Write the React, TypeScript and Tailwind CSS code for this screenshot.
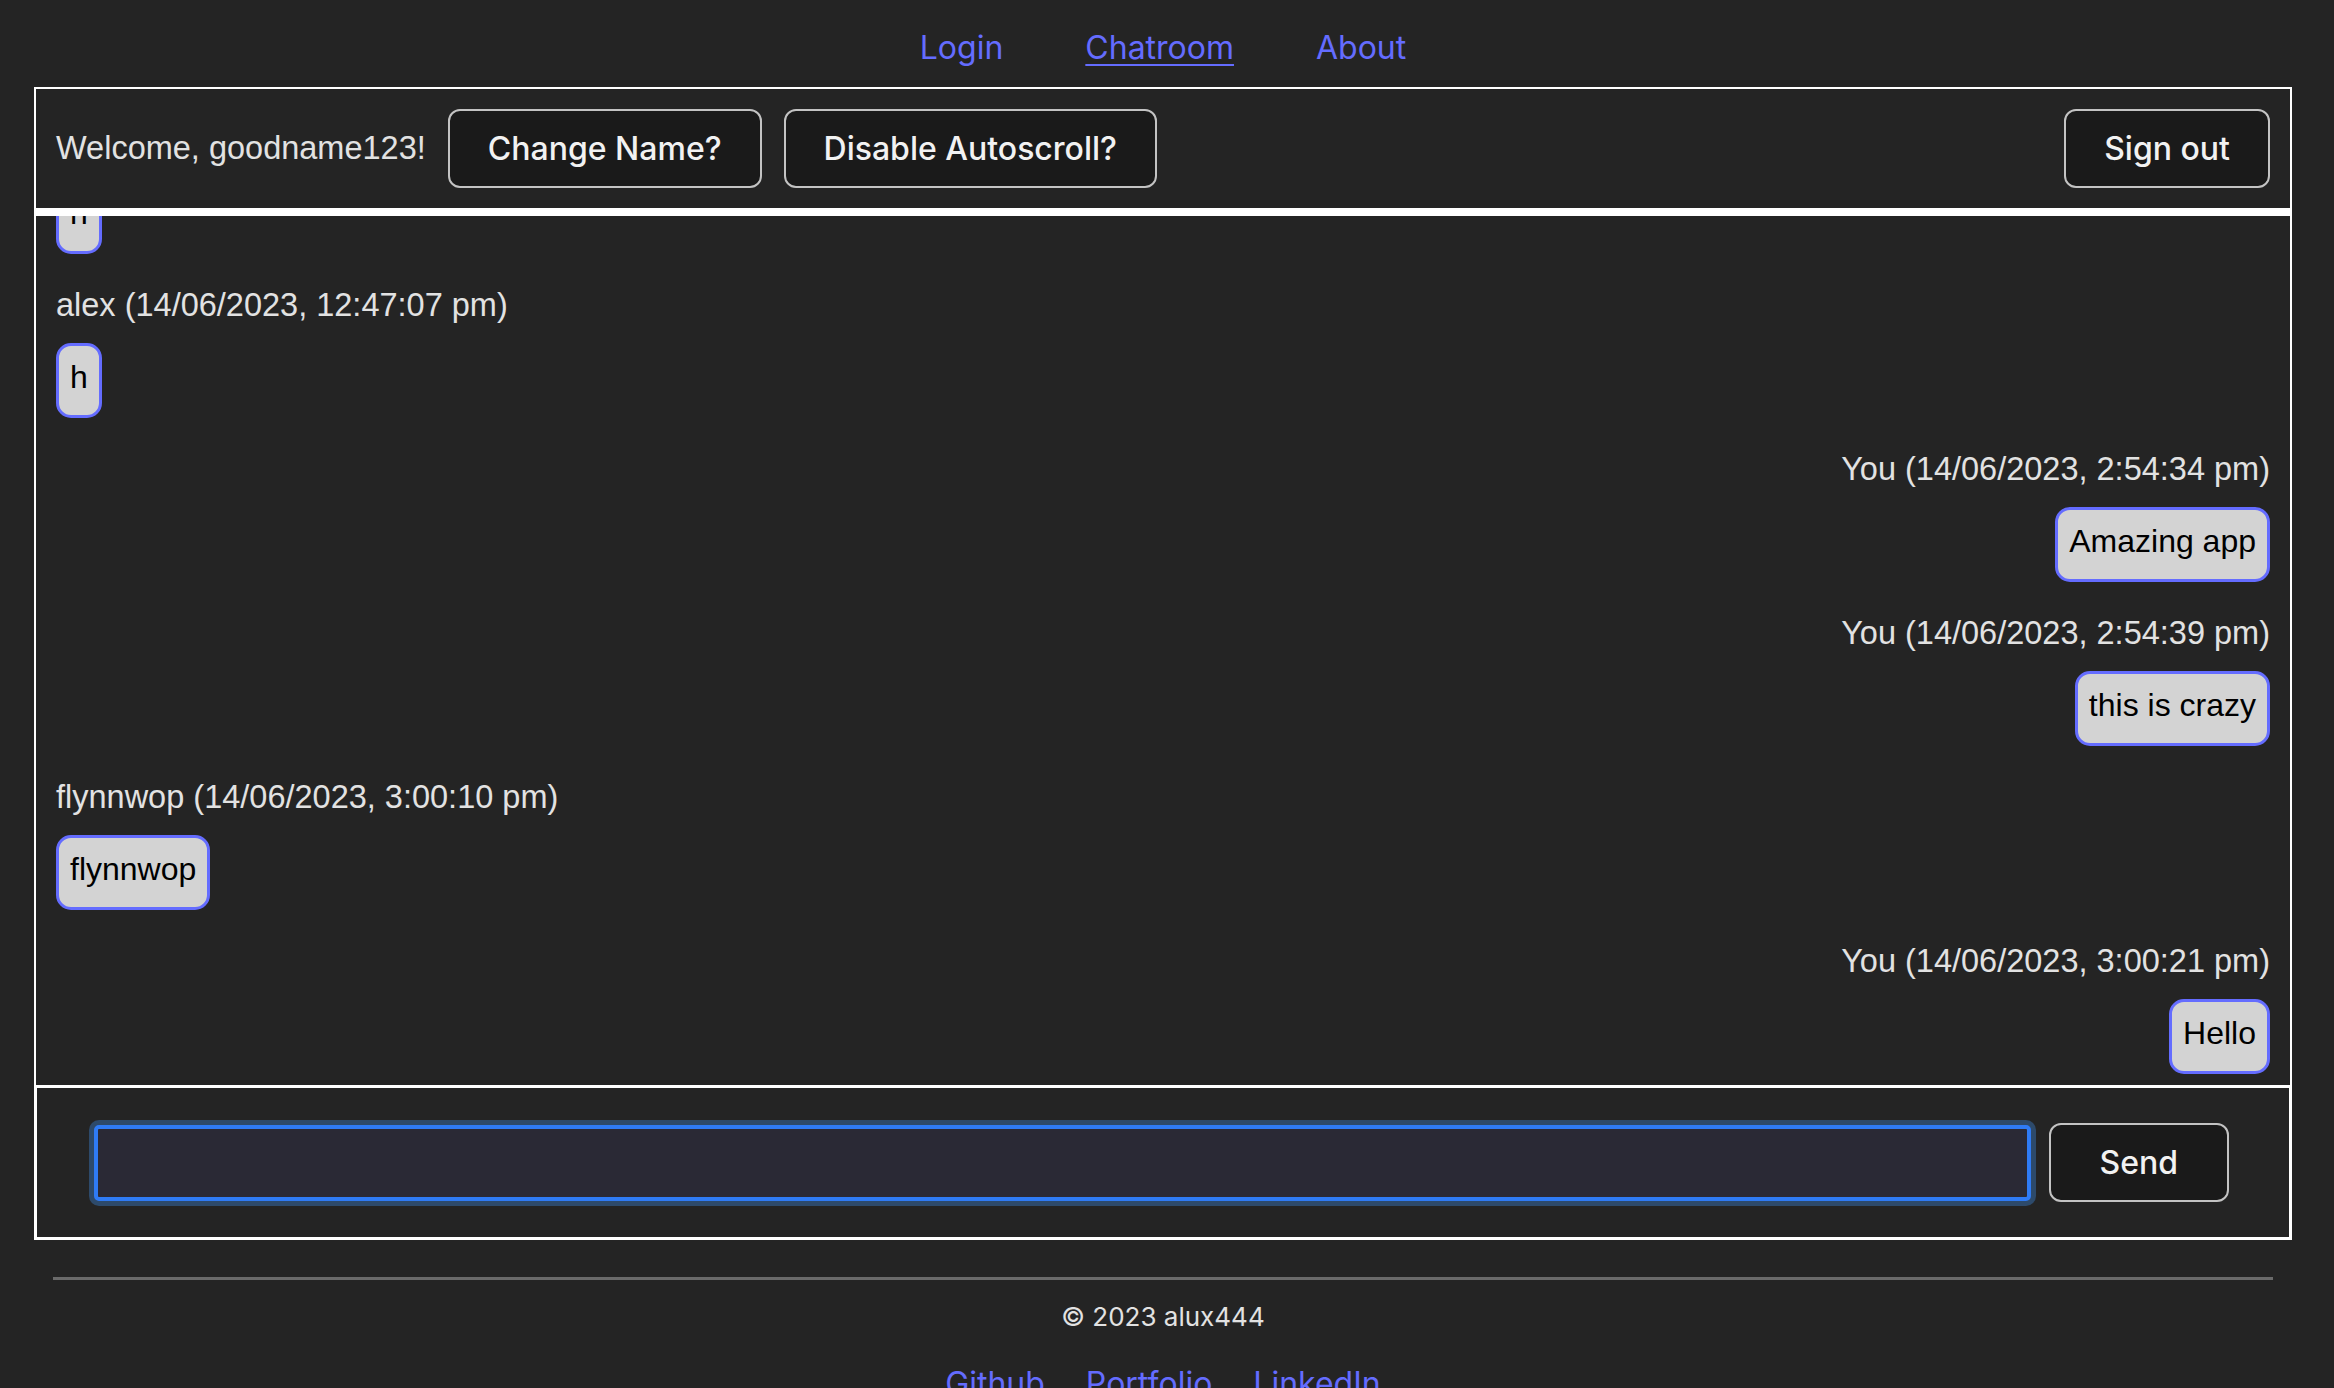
import React from "react";

type Msg = { name: string; time: string; text: string; mine?: boolean };

const messages: Msg[] = [
  { name: "alex", time: "14/06/2023, 12:46:58 pm", text: "h" },
  { name: "alex", time: "14/06/2023, 12:47:05 pm", text: "h" },
  { name: "alex", time: "14/06/2023, 12:47:07 pm", text: "h" },
  { name: "You", time: "14/06/2023, 2:54:34 pm", text: "Amazing app", mine: true },
  { name: "You", time: "14/06/2023, 2:54:39 pm", text: "this is crazy", mine: true },
  { name: "flynnwop", time: "14/06/2023, 3:00:10 pm", text: "flynnwop" },
  { name: "You", time: "14/06/2023, 3:00:21 pm", text: "Hello", mine: true },
];

const btn =
  "h-[79px] shrink-0 rounded-[12px] border-2 border-[#c3c3c3] bg-[#1a1a1a] font-['Inter',sans-serif] text-[32px] font-medium text-[#f2f2f2]";

function Message({ m }: { m: Msg }) {
  return (
    <div className={`flex flex-col ${m.mine ? "items-end" : "items-start"}`}>
      <p className="text-[32.5px] leading-[48px]">
        {m.name} ({m.time})
      </p>
      <div className="mt-[14px] rounded-[15px] border-[3px] border-[#646cff] bg-[#d3d3d3] px-[11px] pt-[13px] pb-[19px] text-[32px] leading-[37px] text-black">
        {m.text}
      </div>
    </div>
  );
}

export default function App() {
  return (
    <div className="h-screen overflow-hidden bg-[#242424] pr-[8px] font-['Liberation_Sans',Arial,sans-serif] text-[#e2e2e2]">
      <nav className="flex justify-center gap-[82px] pt-[22px] pb-[14px] font-['Inter',sans-serif] text-[32px] leading-[51px] text-[#646cff]">
        <a>Login</a>
        <a className="underline decoration-2 underline-offset-[5px]">Chatroom</a>
        <a>About</a>
      </nav>

      <main className="mx-[34px]">
        <div className="flex items-center gap-[22px] border-2 border-white p-[20px]">
          <span className="text-[32.5px]">Welcome, goodname123!</span>
          <button className={`${btn} px-[38px]`}>Change Name?</button>
          <button className={`${btn} px-[38px]`}>Disable Autoscroll?</button>
          <button className={`${btn} ml-auto px-[38px]`}>Sign out</button>
        </div>

        <div className="flex h-[875px] flex-col justify-end gap-[27px] overflow-hidden border-x-2 border-t-[6px] border-white px-[20px] pb-[11px]">
          {messages.map((m, i) => (
            <Message key={i} m={m} />
          ))}
        </div>

        <div className="flex items-center gap-[18px] border-[3px] border-white py-[35px] pl-[57px] pr-[60px]">
          <input className="h-[76px] min-w-0 flex-1 rounded-[5px] border-4 border-[#2f7bf5] bg-[#2a2935] text-[32px] text-white shadow-[0_0_0_5px_#2d4a6b] outline-none" />
          <button className={`${btn} px-[49px]`}>Send</button>
        </div>
      </main>

      <footer className="mx-[53px] mt-[37px] font-['Inter',sans-serif]">
        <div className="h-[3px] bg-[#6a6a6a]" />
        <p className="mt-[17px] text-center text-[26px] leading-[39px]">© 2023 alux444</p>
        <div className="mt-[24px] flex justify-center gap-[41px] text-[32px] leading-[48px] text-[#646cff]">
          <a>Github</a>
          <a>Portfolio</a>
          <a>LinkedIn</a>
        </div>
      </footer>
    </div>
  );
}
